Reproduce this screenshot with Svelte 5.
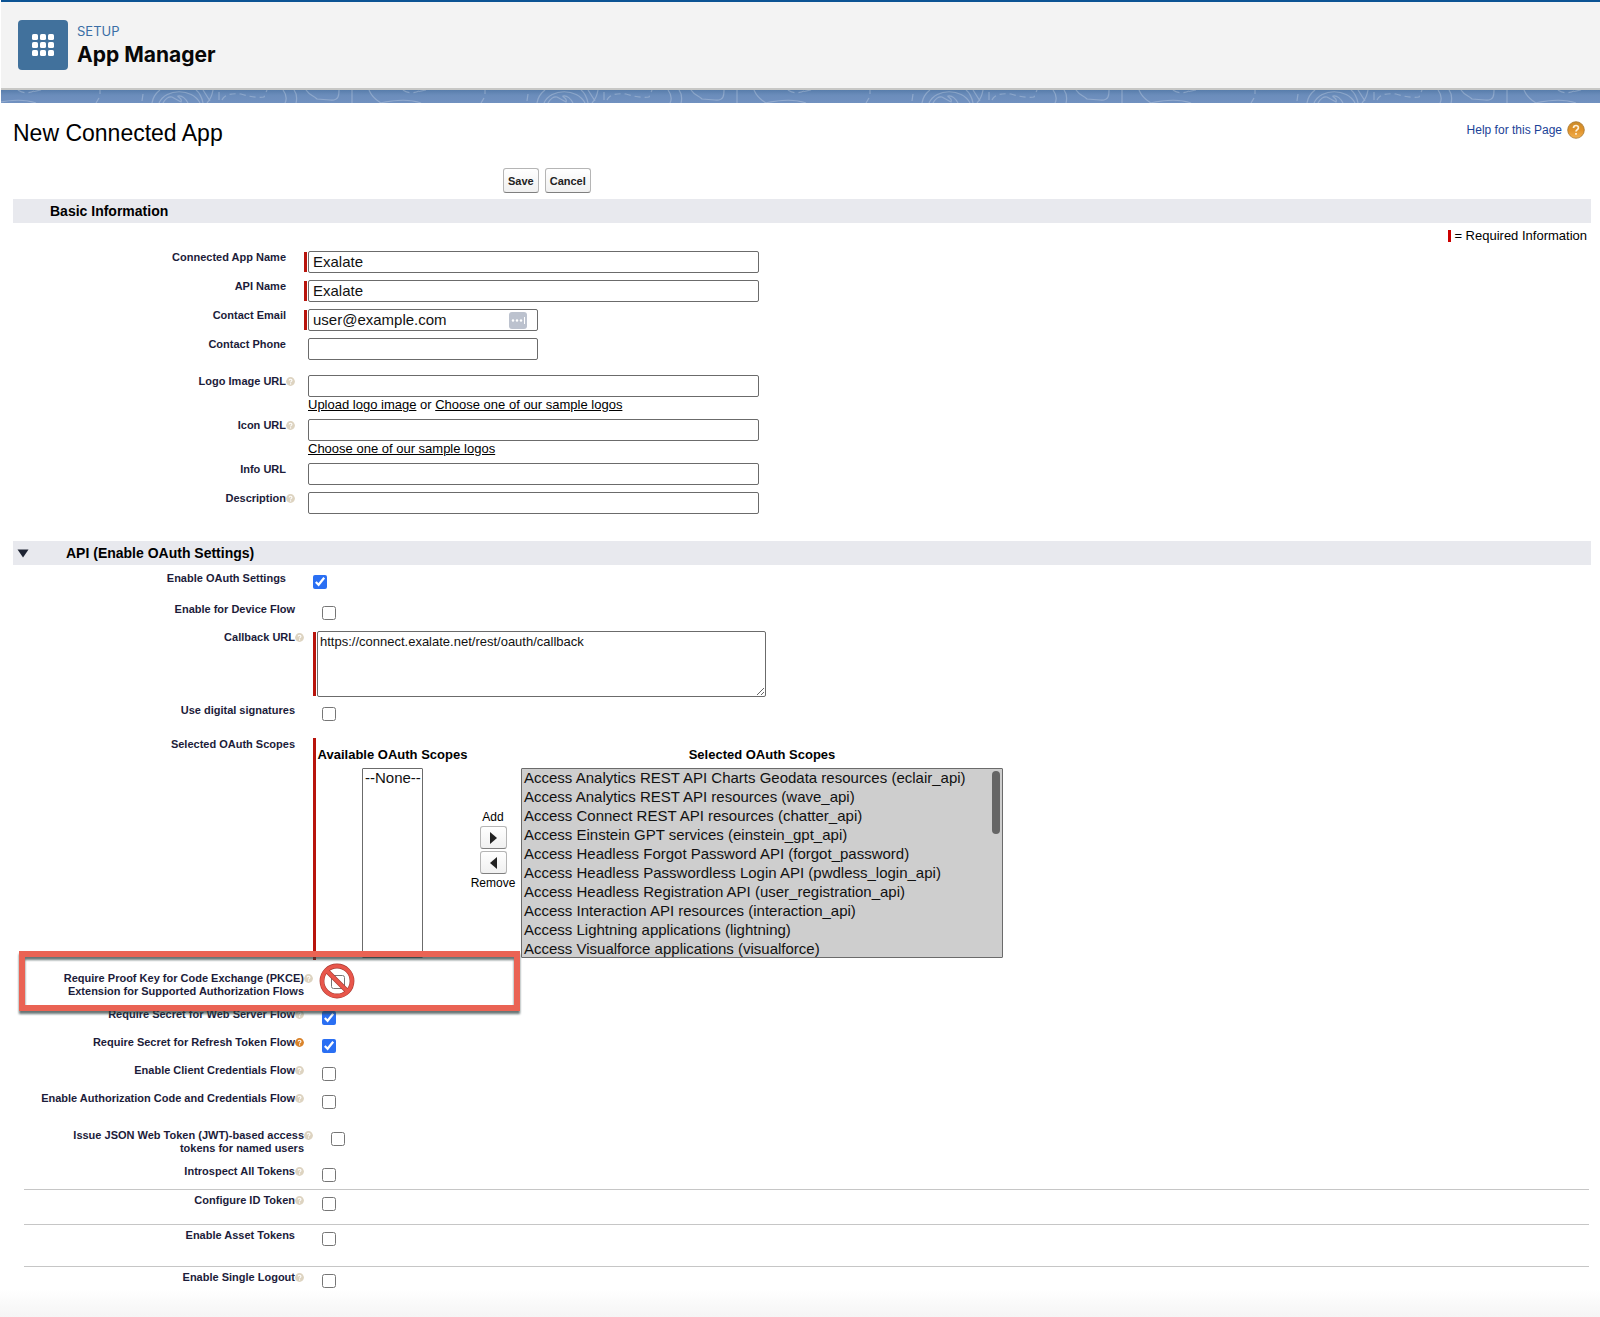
<script>
    const basicFields = [
        { id: 'app-name',    label: 'Connected App Name', value: 'Exalate', required: true },
        { id: 'api-name',    label: 'API Name',           value: 'Exalate', required: true },
        { id: 'email',       label: 'Contact Email',      value: 'user@example.com', required: true, short: true, autofill: true },
        { id: 'phone',       label: 'Contact Phone',      value: '', short: true, space: true },
        { id: 'logo-url',    label: 'Logo Image URL',     value: '', hint: true, links: ['Upload logo image', 'Choose one of our sample logos'] },
        { id: 'icon-url',    label: 'Icon URL',           value: '', hint: true, links: ['Choose one of our sample logos'] },
        { id: 'info-url',    label: 'Info URL',           value: '' },
        { id: 'description', label: 'Description',        value: '', hint: true },
    ];

    const flows = [
        { id: 'web-secret',     label: 'Require Secret for Web Server Flow',            checked: true,  hint: 'pale' },
        { id: 'refresh-secret', label: 'Require Secret for Refresh Token Flow',         checked: true,  hint: 'active' },
        { id: 'client-creds',   label: 'Enable Client Credentials Flow',                checked: false, hint: 'pale' },
        { id: 'auth-code',      label: 'Enable Authorization Code and Credentials Flow', checked: false, hint: 'pale' },
    ];

    const tokenGroups = [
        { id: 'id-token',      label: 'Configure ID Token',   hint: 'pale', size: 'small' },
        { id: 'asset-tokens',  label: 'Enable Asset Tokens',  hint: null,   size: 'large' },
        { id: 'single-logout', label: 'Enable Single Logout', hint: 'pale', size: 'large' },
    ];

    const selectedScopes = [
        'Access Analytics REST API Charts Geodata resources (eclair_api)',
        'Access Analytics REST API resources (wave_api)',
        'Access Connect REST API resources (chatter_api)',
        'Access Einstein GPT services (einstein_gpt_api)',
        'Access Headless Forgot Password API (forgot_password)',
        'Access Headless Passwordless Login API (pwdless_login_api)',
        'Access Headless Registration API (user_registration_api)',
        'Access Interaction API resources (interaction_api)',
        'Access Lightning applications (lightning)',
        'Access Visualforce applications (visualforce)',
    ];

    let callbackUrl = 'https://connect.exalate.net/rest/oauth/callback';
</script>

{#snippet hintIcon(kind)}
    <svg class="hint {kind}" viewBox="0 0 9 9" aria-hidden="true">
        <circle cx="4.5" cy="4.5" r="4.4" />
        <path d="M3.1 3.5C3.2 1.8 6 1.9 5.9 3.5C5.9 4.4 4.6 4.4 4.6 5.4M4.6 6.3V7.4" />
    </svg>
{/snippet}

{#snippet checkRow(item, extra)}
    <div class="row {extra}">
        <label for={item.id}>{item.label}</label>
        <span class="hint-cell">
            {#if item.hint}{@render hintIcon(item.hint)}{/if}
        </span>
        <div class="field">
            <input type="checkbox" id={item.id} checked={item.checked} />
        </div>
    </div>
{/snippet}

<div class="page">
    <header>
        <div class="app-icon">
            <svg viewBox="0 0 22 22" width="22" height="22" aria-hidden="true">
                {#each [0, 8, 16] as y}
                    {#each [0, 8, 16] as x}
                        <rect {x} {y} width="6" height="6" rx="1.6" fill="#fff" />
                    {/each}
                {/each}
            </svg>
        </div>
        <div class="titles">
            <span class="overline">SETUP</span>
            <h1>App Manager</h1>
        </div>
    </header>

    <svg class="band" aria-hidden="true">
        <defs>
            <linearGradient id="band-fill" x1="0" y1="0" x2="0" y2="1">
                <stop offset="0" stop-color="#587dab" />
                <stop offset="0.4" stop-color="#6b8dbb" />
                <stop offset="1" stop-color="#7191c0" />
            </linearGradient>
            <pattern id="topo" x="139" width="385" height="13" patternUnits="userSpaceOnUse">
                <g fill="none" stroke="#fff" stroke-opacity="0.24" stroke-width="1.2">
                    <path d="M3 4L2 11M12 13C13 7 16 3 20 0M56 0C60 3 62 8 63 13" />
                    <path d="M19 13C26 -2 52 -2 60 13" />
                    <path d="M23 13C25 9 29 6 32 7L41 12C43 8 37 7 38 6C42 5 46 9 48 13" />
                    <path d="M63 0L70 11M73 0C72 6 70 10 67 13M79 2V10" />
                    <path d="M82 10C84 5 90 3 101 4C111 7 118 8 124 7L127 0" stroke-dasharray="6 4" />
                    <path d="M143 0C146 4 147 9 145 13M154 0C157 4 157 9 156 13" />
                    <path d="M166 0C170 6 173 5 177 9L190 10C199 11 199 5 199 0M212 0V13" />
                    <path d="M229 0C231 5 236 10 241 13M240 13C254 10 270 9 281 13" />
                    <path d="M263 0C268 4 275 3 279 1M286 0L277 2" stroke-dasharray="7 4" />
                    <path d="M345 0V4M344 8L341 13" />
                </g>
            </pattern>
        </defs>
        <rect width="100%" height="13" fill="url(#band-fill)" />
        <rect width="100%" height="13" fill="url(#topo)" />
    </svg>

    <main>
        <div class="page-head">
            <h2>New Connected App</h2>
            <a class="help" href="#help">
                Help for this Page
                <svg viewBox="0 0 18 18" width="18" height="18" aria-hidden="true">
                    <defs>
                        <linearGradient id="help-fill" x1="0" y1="0" x2="0" y2="1">
                            <stop offset="0" stop-color="#c98a2a" />
                            <stop offset="0.5" stop-color="#e0922a" />
                            <stop offset="1" stop-color="#f3b04e" />
                        </linearGradient>
                    </defs>
                    <circle cx="9" cy="9" r="8.3" fill="url(#help-fill)" stroke="#a8772f" stroke-width="0.8" />
                    <path d="M6.5 7C6.6 3.6 11.6 3.8 11.4 6.9C11.3 8.6 9 8.6 9 10.6M9 12V13.8" fill="none" stroke="#fdf0d8" stroke-width="1.7" />
                </svg>
            </a>
        </div>

        <form on:submit|preventDefault>
            <div class="actions">
                <button type="submit">Save</button>
                <button type="button">Cancel</button>
            </div>

            <h3>Basic Information</h3>
            <p class="legend"><span class="required-bar"></span>= Required Information</p>

            <section class="basic">
                {#each basicFields as f}
                    <div class="row" class:space={f.space}>
                        <label for={f.id}>{f.label}</label>
                        <span class="hint-cell">
                            {#if f.hint}{@render hintIcon('pale')}{/if}
                        </span>
                        <div class="field">
                            <div class="control" class:required={f.required} class:short={f.short}>
                                <input type="text" id={f.id} value={f.value} />
                                {#if f.autofill}
                                    <svg class="autofill" viewBox="0 0 18 17" aria-hidden="true">
                                        <rect width="18" height="17" rx="3" fill="#bcc2ce" />
                                        <circle cx="4" cy="8.5" r="1.2" fill="#fff" />
                                        <circle cx="8" cy="8.5" r="1.2" fill="#fff" />
                                        <circle cx="12" cy="8.5" r="1.2" fill="#fff" />
                                        <path d="M15.5 5V12" stroke="#fff" stroke-width="1" />
                                    </svg>
                                {/if}
                            </div>
                            {#if f.links}
                                <div class="links">
                                    {#each f.links as link, i}{#if i > 0}{' or '}{/if}<a href="#logos">{link}</a>{/each}
                                </div>
                            {/if}
                        </div>
                    </div>
                {/each}
            </section>

            <h3 class="collapsible">
                <svg viewBox="0 0 12 9" width="12" height="9" aria-hidden="true">
                    <path d="M0.5 0.5H11.5L6 8.5Z" fill="#1f2433" />
                </svg>
                API (Enable OAuth Settings)
            </h3>

            <section class="oauth">
                {@render checkRow({ id: 'oauth', label: 'Enable OAuth Settings', checked: true }, 'outer')}
                {@render checkRow({ id: 'device', label: 'Enable for Device Flow', checked: false }, '')}

                <div class="row callback">
                    <label for="callback">Callback URL</label>
                    <span class="hint-cell">{@render hintIcon('pale')}</span>
                    <div class="field">
                        <div class="control required">
                            <textarea id="callback" bind:value={callbackUrl}></textarea>
                        </div>
                    </div>
                </div>

                {@render checkRow({ id: 'signatures', label: 'Use digital signatures', checked: false }, 'loose')}

                <div class="row scopes">
                    <span class="label">Selected OAuth Scopes</span>
                    <span></span>
                    <div class="picker">
                        <div class="list">
                            <label for="available">Available OAuth Scopes</label>
                            <select id="available" multiple size="10">
                                <option>--None--</option>
                            </select>
                        </div>
                        <div class="movers">
                            <span>Add</span>
                            <button type="button" aria-label="Add">
                                <svg viewBox="0 0 7 12" width="7" height="12"><path d="M0 0L7 6L0 12Z" fill="#222" /></svg>
                            </button>
                            <button type="button" aria-label="Remove">
                                <svg viewBox="0 0 7 12" width="7" height="12"><path d="M7 0L0 6L7 12Z" fill="#222" /></svg>
                            </button>
                            <span>Remove</span>
                        </div>
                        <div class="list chosen">
                            <label for="selected">Selected OAuth Scopes</label>
                            <div class="select-wrap">
                                <select id="selected" multiple size="10">
                                    {#each selectedScopes as scope}
                                        <option>{scope}</option>
                                    {/each}
                                </select>
                                <span class="thumb"></span>
                            </div>
                        </div>
                    </div>
                </div>

                <div class="row wide">
                    <label for="pkce">Require Proof Key for Code Exchange (PKCE)<br />Extension for Supported Authorization Flows</label>
                    <span class="hint-cell">{@render hintIcon('pale')}</span>
                    <div class="field">
                        <input type="checkbox" id="pkce" />
                        <svg class="prohibited" viewBox="0 0 36 38" aria-hidden="true">
                            <g fill="none" stroke="#a83b33" stroke-width="4.8">
                                <circle cx="18" cy="19" r="15" />
                                <path d="M7.5 8.5L28.5 29.5" />
                            </g>
                            <g fill="none" stroke="#e8564b" stroke-width="3.6">
                                <circle cx="18" cy="19" r="15" />
                                <path d="M7.5 8.5L28.5 29.5" />
                            </g>
                        </svg>
                    </div>
                    <div class="callout"></div>
                </div>

                {#each flows as flow}
                    {@render checkRow(flow, '')}
                {/each}

                <div class="row wide jwt">
                    <label for="jwt">Issue JSON Web Token (JWT)-based access<br />tokens for named users</label>
                    <span class="hint-cell">{@render hintIcon('pale')}</span>
                    <div class="field"><input type="checkbox" id="jwt" /></div>
                </div>

                {@render checkRow({ id: 'introspect', label: 'Introspect All Tokens', hint: 'pale' }, 'tight')}

                {#each tokenGroups as group}
                    <div class="group {group.size}">
                        {@render checkRow(group, '')}
                    </div>
                {/each}
            </section>
        </form>
    </main>
</div>

<style>
    :global(body) {
        background: #fff;
    }

    .page {
        min-height: 100vh;
        box-sizing: border-box;
        padding-left: 1px;
        font-family: "Liberation Sans", Arial, Helvetica, sans-serif;
        font-size: 13px;
        color: #000;
        background: linear-gradient(#fff, #f5f5f5) bottom / 100% 28px no-repeat;
    }

    header {
        display: flex;
        align-items: center;
        gap: 9px;
        height: 90px;
        box-sizing: border-box;
        padding: 0 17px;
        background: #f3f3f3;
        border-top: 2px solid #0b5394;
        border-bottom: 2px solid #c8c8c6;
    }

    .app-icon {
        display: flex;
        align-items: center;
        justify-content: center;
        width: 50px;
        height: 50px;
        border-radius: 4px;
        background: #41719c;
    }

    .titles {
        display: flex;
        flex-direction: column;
        font-family: Inter, sans-serif;
    }

    .overline {
        font-size: 13px;
        line-height: 20px;
        color: #3a6ea5;
    }

    h1 {
        margin: 0;
        font-size: 21px;
        line-height: 28px;
        font-weight: 700;
        color: #080707;
    }

    .band {
        display: block;
        width: 100%;
        height: 13px;
    }

    main {
        padding: 0 9px 0 12px;
    }

    .page-head {
        display: flex;
        justify-content: space-between;
        padding-top: 17px;
        height: 48px;
    }

    h2 {
        margin: 0;
        font-size: 23px;
        line-height: 26px;
        font-weight: 400;
    }

    .help {
        display: flex;
        align-items: center;
        gap: 5px;
        height: 20px;
        padding-right: 6px;
        font-size: 12px;
        color: #1b4297;
        text-decoration: none;
    }

    .actions {
        display: flex;
        gap: 6px;
        padding-left: 490px;
        margin-bottom: 6px;
    }

    button {
        height: 25px;
        padding: 0 4px;
        border: 1px solid #b5b5b5;
        border-bottom-color: #7f7f7f;
        border-radius: 3px;
        background: linear-gradient(#fff, #f0f0f0);
        font-family: inherit;
        font-size: 11px;
        font-weight: 700;
        color: #222;
    }

    h3 {
        display: flex;
        align-items: center;
        margin: 0;
        padding-left: 37px;
        height: 24px;
        background: #e8e9ee;
        font-size: 14px;
        font-weight: 700;
    }

    h3.collapsible {
        padding-left: 4px;
        gap: 37px;
    }

    .legend {
        display: flex;
        justify-content: flex-end;
        align-items: center;
        gap: 3px;
        margin: 0;
        padding: 6px 4px 0 0;
        line-height: 14px;
    }

    .required-bar {
        width: 3px;
        height: 12px;
        background: #c00;
    }

    .row {
        --label-width: 282px;
        position: relative;
        display: grid;
        grid-template-columns: var(--label-width) 18px 1fr;
        align-items: start;
        min-height: 28px;
    }

    .row > label,
    .label {
        font-size: 11px;
        line-height: 13px;
        font-weight: 700;
        text-align: right;
        color: #1c1c3a;
    }

    .hint-cell {
        display: flex;
        align-items: center;
        height: 13px;
    }

    .hint {
        width: 9px;
        height: 9px;
    }

    .hint circle { fill: #ddd3c0; }
    .hint path { fill: none; stroke: #fff; stroke-width: 1.1; }
    .hint.active circle { fill: #d9832b; }

    .basic {
        padding: 8px 0 20px;
    }

    .basic .row {
        --label-width: 273px;
        min-height: 22px;
        padding-bottom: 7px;
    }

    .basic .space {
        padding-bottom: 15px;
    }

    .control {
        position: relative;
        display: flex;
        max-width: 451px;
        padding-left: 4px;
    }

    .control.short {
        max-width: 230px;
    }

    .control.required::before {
        content: '';
        position: absolute;
        left: 0;
        top: 1px;
        bottom: 1px;
        width: 3px;
        background: #b8140c;
    }

    input[type='text'] {
        width: 100%;
        height: 22px;
        box-sizing: border-box;
        padding: 0 4px 2px;
        border: 1px solid #6b6b6b;
        border-radius: 2px;
        font-family: inherit;
        font-size: 15px;
        color: #111;
    }

    .autofill {
        position: absolute;
        right: 11px;
        top: 3px;
        width: 18px;
        height: 17px;
    }

    .links {
        padding: 1px 0 0 4px;
        line-height: 14px;
    }

    .links a {
        color: #000;
    }

    .oauth {
        padding-top: 7px;
    }

    input[type='checkbox'] {
        display: block;
        width: 14px;
        height: 14px;
        margin: 3px 0 0 9px;
        accent-color: #2a6ff3;
    }

    .row.outer {
        --label-width: 273px;
        min-height: 31px;
    }

    .row.wide {
        --label-width: 291px;
        min-height: 36px;
    }

    .row.callback {
        min-height: 73px;
    }

    .row.loose {
        min-height: 34px;
    }

    .row.jwt {
        margin-top: 9px;
    }

    .row.tight {
        min-height: 24px;
    }

    textarea {
        width: 100%;
        height: 66px;
        box-sizing: border-box;
        padding: 2px;
        border: 1px solid #6b6b6b;
        border-radius: 2px;
        font-family: inherit;
        font-size: 13px;
        color: #111;
    }

    .row.callback .control {
        max-width: 449px;
    }

    .row.scopes {
        min-height: 234px;
    }

    .picker {
        display: grid;
        grid-template-columns: 145px 56px 482px;
        align-items: start;
        height: 222px;
        box-sizing: border-box;
        padding: 9px 0 0 4px;
        border-left: 3px solid #b8140c;
    }

    .list {
        display: flex;
        flex-direction: column;
        align-items: center;
        gap: 6px;
    }

    .list label {
        font-weight: 700;
        line-height: 15px;
        white-space: nowrap;
    }

    .select-wrap {
        position: relative;
        width: 100%;
    }

    select {
        display: block;
        width: 61px;
        height: 190px;
        box-sizing: border-box;
        padding: 0;
        border: 1px solid #6b6b6b;
        border-radius: 1px;
        overflow: hidden;
        scrollbar-width: none;
        font-family: inherit;
        font-size: 15px;
        color: #111;
        background: #fff;
    }

    option {
        min-height: 19px;
        box-sizing: border-box;
        padding: 0 2px;
        line-height: 19px;
    }

    .chosen select {
        width: 100%;
        background: #cecece;
    }

    .thumb {
        position: absolute;
        top: 3px;
        right: 3px;
        width: 8px;
        height: 63px;
        border-radius: 4px;
        background: #666;
    }

    .movers {
        display: flex;
        flex-direction: column;
        align-items: center;
        gap: 2px;
        padding-top: 63px;
        font-size: 12px;
        line-height: 14px;
    }

    .movers button {
        display: flex;
        align-items: center;
        justify-content: center;
        width: 27px;
        height: 23px;
    }

    /* highlight drawn over the PKCE row */
    .callout {
        position: absolute;
        z-index: 1;
        left: 6px;
        top: -21px;
        width: 501px;
        height: 60px;
        box-sizing: border-box;
        border: 6px solid #ea6354;
        filter: drop-shadow(0 3px 1px rgba(40, 60, 60, 0.7));
        pointer-events: none;
    }

    .prohibited {
        position: absolute;
        z-index: 2;
        left: 306px;
        top: -10px;
        width: 36px;
        height: 38px;
        pointer-events: none;
    }

    .group {
        margin: 0 2px 0 11px;
        border-top: 1px solid #c6c6c6;
        padding-top: 4px;
    }

    .group .row {
        margin-left: -11px;
    }

    .group.small {
        padding-bottom: 2px;
    }

    .group.large {
        padding-bottom: 9px;
    }
</style>
